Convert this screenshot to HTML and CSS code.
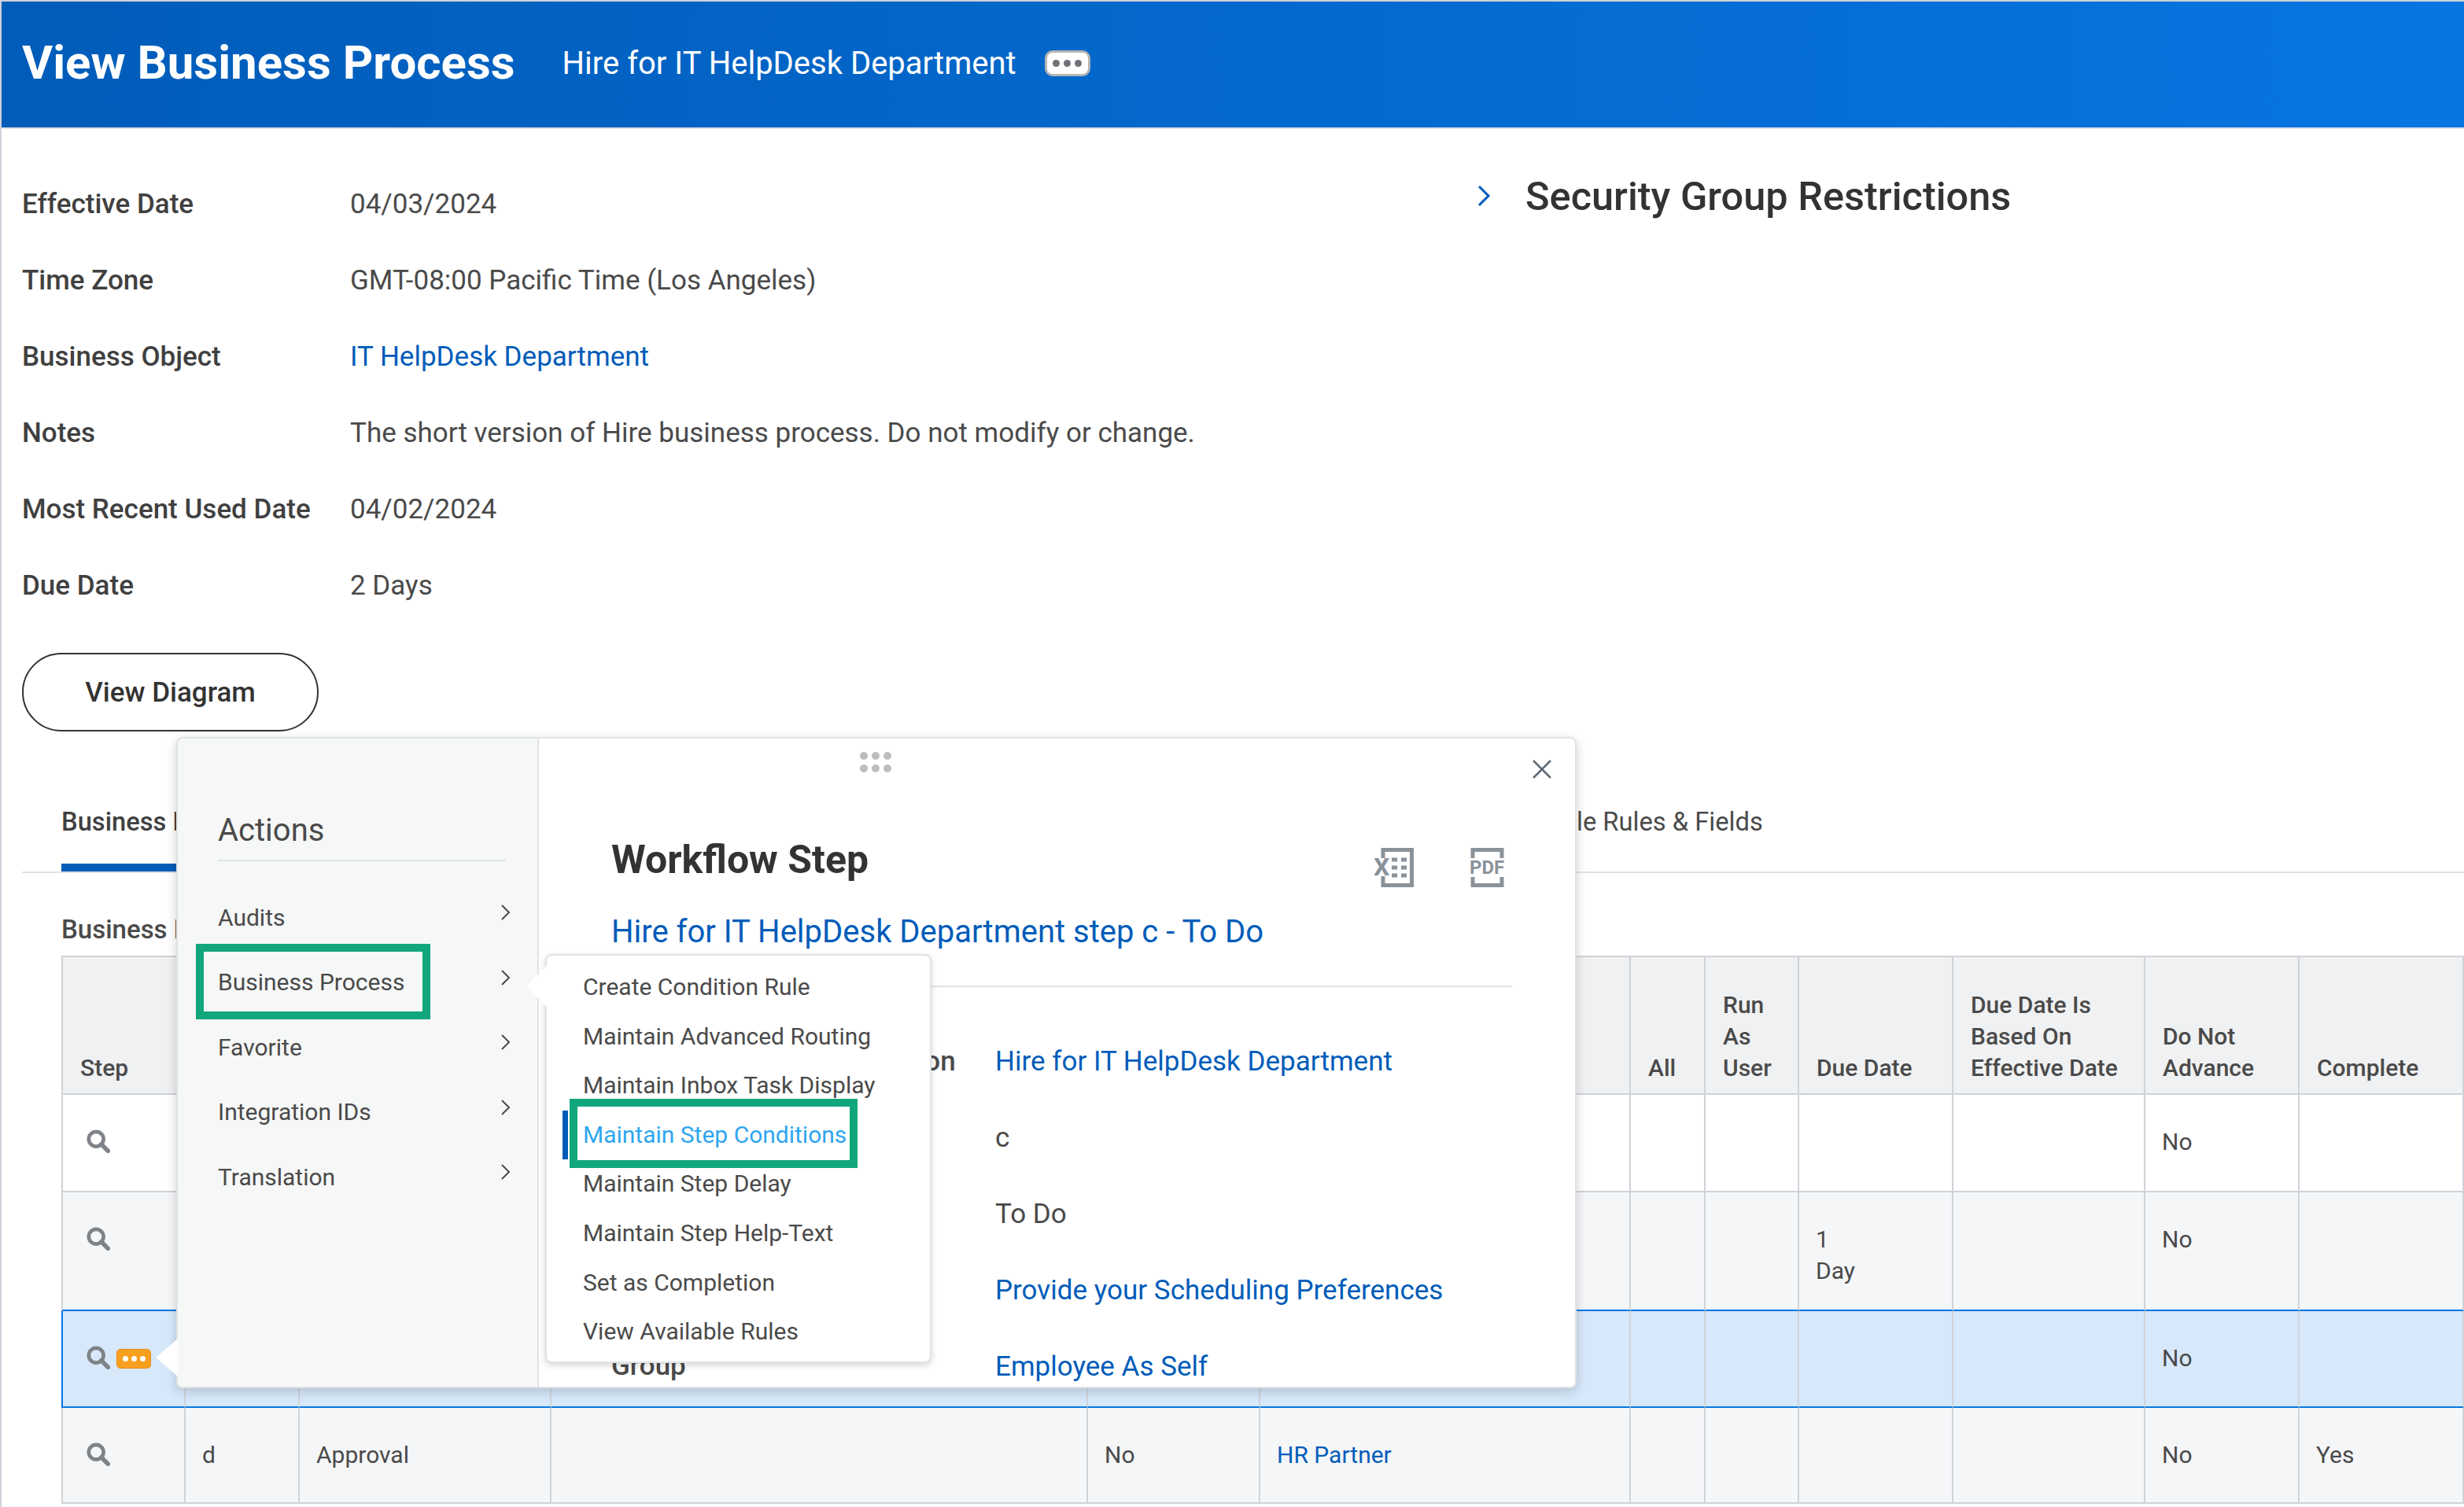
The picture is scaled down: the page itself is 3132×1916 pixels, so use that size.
FILE: index.html
```html
<!DOCTYPE html>
<html lang="en">
<head>
  <meta charset="UTF-8" />
  <meta name="viewport" content="width=device-width, initial-scale=1.0" />
  <title>View Business Process</title>
  <link rel="stylesheet" href="styles.css">
</head>
<body>
  <div class="page">
    <header class="topbar">
      <h1>View Business Process</h1>
      <span class="subtitle">Hire for IT HelpDesk Department</span>
      <button class="kebab"><i></i><i></i><i></i></button>
    </header>

    <main class="content">
      <div class="top-section">
        <dl class="details">
          <dt>Effective Date</dt><dd>04/03/2024</dd>
          <dt>Time Zone</dt><dd>GMT-08:00 Pacific Time (Los Angeles)</dd>
          <dt>Business Object</dt><dd><a href="#">IT HelpDesk Department</a></dd>
          <dt>Notes</dt><dd>The short version of Hire business process. Do not modify or change.</dd>
          <dt>Most Recent Used Date</dt><dd>04/02/2024</dd>
          <dt>Due Date</dt><dd>2 Days</dd>
        </dl>
        <div class="security">
          <svg class="security-chevron" width="18" height="30" viewBox="0 0 18 30"><path d="M3 3l12 12L3 27" fill="none" stroke="#005cb9" stroke-width="3"/></svg>
          <h2>Security Group Restrictions</h2>
        </div>
      </div>

      <button class="pill">View Diagram</button>

      <div class="tabs">
        <span class="tab active">Business Process</span>
        <span class="tab">Available Rules &amp; Fields</span>
      </div>

      <h3 class="section-title">Business Process</h3>

      <table class="steps">
        <colgroup>
          <col class="c1"><col class="c2"><col class="c3"><col class="c4"><col class="c5"><col class="c6">
          <col class="c7"><col class="c8"><col class="c9"><col class="c10"><col class="c11"><col class="c12">
        </colgroup>
        <thead>
          <tr>
            <th>Step</th><th>Order</th><th>Type</th><th>Specify</th><th>Optional</th><th>Group</th>
            <th>All</th><th>Run<br>As<br>User</th><th>Due Date</th><th>Due Date Is<br>Based On<br>Effective Date</th><th>Do Not<br>Advance</th><th>Complete</th>
          </tr>
        </thead>
        <tbody>
          <tr class="row-one">
            <td><svg class="search" width="30" height="30" viewBox="0 0 32 32"><circle cx="13" cy="13" r="10" fill="none" stroke="#7f8387" stroke-width="5"/><path d="M20 20l9 9" stroke="#7f8387" stroke-width="6" stroke-linecap="round"/></svg></td>
            <td></td><td></td><td></td><td></td><td></td><td></td><td></td><td></td><td></td><td>No</td><td></td>
          </tr>
          <tr class="row-two">
            <td><svg class="search" width="30" height="30" viewBox="0 0 32 32"><circle cx="13" cy="13" r="10" fill="none" stroke="#7f8387" stroke-width="5"/><path d="M20 20l9 9" stroke="#7f8387" stroke-width="6" stroke-linecap="round"/></svg></td>
            <td></td><td></td><td></td><td></td><td></td><td></td><td></td><td>1<br>Day</td><td></td><td>No</td><td></td>
          </tr>
          <tr class="row-selected">
            <td>
              <div class="step-icons">
                <svg class="search" width="30" height="30" viewBox="0 0 32 32"><circle cx="13" cy="13" r="10" fill="none" stroke="#7f8387" stroke-width="5"/><path d="M20 20l9 9" stroke="#7f8387" stroke-width="6" stroke-linecap="round"/></svg>
                <span class="orange-btn"><i></i><i></i><i></i></span>
              </div>
            </td>
            <td></td><td></td><td></td><td></td><td></td><td></td><td></td><td></td><td></td><td>No</td><td></td>
          </tr>
          <tr class="row-four">
            <td><svg class="search" width="30" height="30" viewBox="0 0 32 32"><circle cx="13" cy="13" r="10" fill="none" stroke="#7f8387" stroke-width="5"/><path d="M20 20l9 9" stroke="#7f8387" stroke-width="6" stroke-linecap="round"/></svg></td>
            <td>d</td><td>Approval</td><td></td><td>No</td><td><a href="#">HR Partner</a></td><td></td><td></td><td></td><td></td><td>No</td><td>Yes</td>
          </tr>
        </tbody>
      </table>
    </main>

    <!-- popup over the selected row -->
    <div class="popup">
      <span class="popup-arrow"></span>
      <aside class="actions">
        <h4>Actions</h4>
        <ul>
          <li>Audits<svg width="12" height="20" viewBox="0 0 12 20"><path d="M1 1l9 9-9 9" fill="none" stroke="#4a4a4a" stroke-width="2"/></svg></li>
          <li>Business Process<svg width="12" height="20" viewBox="0 0 12 20"><path d="M1 1l9 9-9 9" fill="none" stroke="#4a4a4a" stroke-width="2"/></svg></li>
          <li>Favorite<svg width="12" height="20" viewBox="0 0 12 20"><path d="M1 1l9 9-9 9" fill="none" stroke="#4a4a4a" stroke-width="2"/></svg></li>
          <li>Integration IDs<svg width="12" height="20" viewBox="0 0 12 20"><path d="M1 1l9 9-9 9" fill="none" stroke="#4a4a4a" stroke-width="2"/></svg></li>
          <li>Translation<svg width="12" height="20" viewBox="0 0 12 20"><path d="M1 1l9 9-9 9" fill="none" stroke="#4a4a4a" stroke-width="2"/></svg></li>
        </ul>
      </aside>
      <section class="panel">
        <div class="drag"><i></i><i></i><i></i><i></i><i></i><i></i></div>
        <svg class="close" width="26" height="26" viewBox="0 0 26 26"><path d="M2 2l22 22M24 2L2 24" stroke="#5e6a75" stroke-width="2.5"/></svg>
        <div class="panel-head">
          <h2>Workflow Step</h2>
          <div class="export">
            <svg width="50" height="50" viewBox="0 0 50 50">
              <path d="M11 13V2.5h36.500v45H11V36" fill="none" stroke="#8a929a" stroke-width="5"/>
              <text x="-1" y="35" class="export-text">X</text>
              <path d="M22 15h7M34 15h7M22 25h7M34 25h7M22 35h7M34 35h7" stroke="#8a929a" stroke-width="5"/>
            </svg>
            <svg width="50" height="50" viewBox="0 0 50 50">
              <path d="M5 13V2.500h37V13M5 37v10.500h37V37" fill="none" stroke="#8a929a" stroke-width="5"/>
              <text x="1" y="33" class="export-text small">PDF</text>
            </svg>
          </div>
        </div>
        <a class="panel-link" href="#">Hire for IT HelpDesk Department step c - To Do</a>
        <dl class="fields">
          <dt>Business Process Definition</dt><dd><a href="#">Hire for IT HelpDesk Department</a></dd>
          <dt>Step</dt><dd>c</dd>
          <dt>Type</dt><dd>To Do</dd>
          <dt>To Do</dt><dd><a href="#">Provide your Scheduling Preferences</a></dd>
          <dt>Security<br>Group</dt><dd><a href="#">Employee As Self</a></dd>
        </dl>
      </section>
    </div>

    <div class="submenu">
      <span class="submenu-arrow"></span>
      <ul>
        <li>Create Condition Rule</li>
        <li>Maintain Advanced Routing</li>
        <li>Maintain Inbox Task Display</li>
        <li class="current">Maintain Step Conditions</li>
        <li>Maintain Step Delay</li>
        <li>Maintain Step Help-Text</li>
        <li>Set as Completion</li>
        <li>View Available Rules</li>
      </ul>
    </div>

    <!-- green annotation boxes -->
    <div class="mark mark-process"></div>
    <div class="mark mark-conditions"></div>
  </div>
</body>
</html>
```

FILE: styles.css
```css
* {
  box-sizing: border-box;
}
body {
  margin: 0;
  background: #fff;
  font-family: Roboto, "Liberation Sans", sans-serif;
  color: #4a4a4a;
}
a {
  color: #005cb9;
  text-decoration: none;
}
.page {
  position: relative;
  width: 3132px;
  height: 1916px;
  overflow: hidden;
  border-left: 2px solid #ced3d9;
}

/* header */
.topbar {
  display: flex;
  align-items: center;
  height: 164px;
  padding: 0 0 3px 26px;
  background: linear-gradient(90deg, #005cb9, #0875e1);
  border-top: 2px solid #ced3d9;
  border-bottom: 2px solid #dfe2e6;
  color: #fff;
}
.topbar h1 {
  margin: 0 60px 2px 0;
  font-size: 60px;
  font-weight: 700;
}
.subtitle {
  font-size: 40px;
}
.kebab {
  display: flex;
  align-items: center;
  justify-content: center;
  gap: 5px;
  width: 58px;
  height: 33px;
  margin-left: 36px;
  padding: 0;
  background: #fff;
  border: 3px solid #b5b5b5;
  border-radius: 10px;
}
.kebab i {
  width: 9px;
  height: 9px;
  border-radius: 50%;
  background: #6f7379;
}

/* details */
.content {
  padding-left: 26px;
}
.top-section {
  display: flex;
}
.details {
  display: grid;
  grid-template-columns: 417px 1fr;
  grid-auto-rows: 97px;
  width: 1849px;
  margin: 47px 0 0;
  font-size: 35px;
  line-height: 97px;
}
.details dt {
  font-weight: 500;
  color: #404040;
}
.details dd {
  margin: 0;
}
.security {
  display: flex;
  align-items: center;
  gap: 44px;
  height: 60px;
  margin-top: 55px;
}
.security h2 {
  margin: 0;
  font-size: 50.5px;
  font-weight: 500;
  color: #333;
}
.pill {
  display: block;
  width: 377px;
  height: 100px;
  margin-top: 37px;
  background: #fff;
  border: 2px solid #333;
  border-radius: 50px;
  font: 500 35px Roboto, sans-serif;
  color: #333;
}

/* tabs */
.tabs {
  display: flex;
  height: 122px;
  margin-top: 58px;
  border-bottom: 2px solid #dfe2e6;
  font-size: 32.7px;
  line-height: 114px;
}
.tab.active {
  width: 300px;
  margin-left: 50px;
  border-bottom: 10px solid #005cb9;
  font-weight: 500;
  color: #404040;
}
.tab {
  height: 120px;
}
.tab:last-child {
  margin-left: 1520px;
}
.section-title {
  margin: 49px 0 0 50px;
  font-size: 33px;
  font-weight: 500;
  line-height: 46px;
  color: #4a4a4a;
}

/* table */
.steps {
  width: 3054px;
  margin: 10px 0 0 50px;
  table-layout: fixed;
  border-collapse: separate;
  border-spacing: 0;
  font-size: 30px;
  line-height: 40px;
}
.c1 { width: 158px; }
.c2 { width: 145px; }
.c3 { width: 320px; }
.c4 { width: 682px; }
.c5 { width: 219px; }
.c6 { width: 471px; }
.c7 { width: 95px; }
.c8 { width: 119px; }
.c9 { width: 196px; }
.c10 { width: 244px; }
.c11 { width: 196px; }
.c12 { width: 209px; }
.steps th,
.steps td {
  padding: 40px 0 0 21px;
  border-right: 2px solid #ced3d9;
  border-bottom: 2px solid #ced3d9;
  vertical-align: top;
}
.steps th {
  height: 177px;
  padding: 0 0 12px 22px;
  border-top: 2px solid #ced3d9;
  background: #f0f1f2;
  font-weight: 500;
  text-align: left;
  vertical-align: bottom;
}
.steps tr > :first-child {
  border-left: 2px solid #ced3d9;
}
.row-one { height: 124px; }
.row-two { height: 151px; }
.row-selected { height: 123px; }
.row-four { height: 122px; }
.row-two td,
.row-four td {
  background: #f5f6f8;
}
.steps .row-two td {
  border-bottom-color: #0875e1;
}
.row-selected td {
  background: #d6e8fa;
}
.steps .row-selected td {
  border-bottom-color: #0875e1;
}
.steps .row-selected td:first-child {
  border-left-color: #0875e1;
}
.search {
  display: block;
  margin: 4px 0 0 9px;
}
.step-icons {
  display: flex;
  align-items: center;
  gap: 8px;
}
.orange-btn {
  display: flex;
  align-items: center;
  justify-content: center;
  gap: 4px;
  width: 44px;
  height: 25px;
  margin-top: 6px;
  background: #f7a01f;
  border: 1px solid #f08a1d;
  border-radius: 5px;
}
.orange-btn i {
  width: 7px;
  height: 7px;
  border-radius: 50%;
  background: #fff;
}

/* popup */
.popup {
  position: absolute;
  left: 222px;
  top: 937px;
  display: flex;
  width: 1780px;
  height: 828px;
  background: #fff;
  border: 2px solid #dfe2e6;
  border-radius: 8px;
  box-shadow: 0 4px 14px rgba(0, 0, 0, 0.18);
}
.popup-arrow {
  position: absolute;
  left: -28px;
  top: 763px;
  border-top: 24px solid transparent;
  border-bottom: 24px solid transparent;
  border-right: 28px solid #fff;
}
.actions {
  width: 459px;
  padding: 92px 40px 0 51px;
  background: #f6f7f7;
  border-right: 2px solid #dfe2e6;
  border-radius: 6px 0 0 6px;
}
.actions h4 {
  margin: 0;
  padding-bottom: 12px;
  border-bottom: 2px solid #dfe2e6;
  font-size: 40px;
  font-weight: 400;
  line-height: 50px;
}
.actions ul {
  margin: 30px 0 0;
  padding: 0;
  list-style: none;
}
.actions li {
  display: flex;
  justify-content: space-between;
  align-items: center;
  height: 82.5px;
  font-size: 30px;
}
.actions li svg {
  margin: -12px -6px 0 0;
}

.panel {
  position: relative;
  flex: 1;
  height: 824px;
  overflow: hidden;
  padding: 124px 80px 0 92px;
}
.drag {
  position: absolute;
  left: 408px;
  top: 17px;
  display: grid;
  grid-template-columns: repeat(3, 10px);
  gap: 6px 5px;
}
.drag i {
  width: 10px;
  height: 10px;
  border-radius: 50%;
  background: #bdbdbd;
}
.close {
  position: absolute;
  right: 29px;
  top: 26px;
}
.panel-head {
  display: flex;
  justify-content: space-between;
  align-items: flex-start;
  height: 60px;
}
.panel-head h2 {
  margin: 0;
  font-size: 50px;
  font-weight: 700;
  line-height: 60px;
  color: #333;
}
.export {
  display: flex;
  gap: 70px;
  margin: 15px 5px 0 0;
}
.export-text {
  font: 700 32px Roboto, sans-serif;
  fill: #8a929a;
}
.export-text.small {
  font-size: 24px;
}
.panel-link {
  display: block;
  margin-top: 37px;
  padding-bottom: 43px;
  border-bottom: 2px solid #dfe2e6;
  font-size: 40px;
  line-height: 50px;
}
.fields {
  display: grid;
  grid-template-columns: 488px 1fr;
  grid-auto-rows: 97px;
  margin: 46px 0 0;
  font-size: 35px;
  line-height: 97px;
}
.fields dt {
  font-weight: 500;
  white-space: nowrap;
}
.fields dd {
  margin: 0;
}
.fields dt:last-of-type {
  line-height: 40px;
  margin-top: -12px;
}

/* submenu */
.submenu {
  position: absolute;
  left: 691px;
  top: 1213px;
  width: 491px;
  height: 520px;
  padding-top: 9px;
  background: #fff;
  border: 2px solid #dfe2e6;
  border-radius: 8px;
  box-shadow: 0 3px 8px rgba(0, 0, 0, 0.16);
}
.submenu-arrow {
  position: absolute;
  left: -26px;
  top: 13px;
  border-top: 26px solid transparent;
  border-bottom: 26px solid transparent;
  border-right: 26px solid #fff;
}
.submenu ul {
  margin: 0;
  padding: 0;
  list-style: none;
}
.submenu li {
  height: 62.6px;
  padding-left: 46px;
  font-size: 30px;
  line-height: 62.6px;
}
.submenu li.current {
  position: relative;
  color: #2ea6ef;
}
.submenu li.current::before {
  content: "";
  position: absolute;
  left: 20px;
  top: 0;
  width: 7px;
  height: 62px;
  background: #005cb9;
}

/* annotations */
.mark {
  position: absolute;
  border: 10px solid #12a67c;
}
.mark-process {
  left: 247px;
  top: 1200px;
  width: 298px;
  height: 96px;
}
.mark-conditions {
  left: 722px;
  top: 1397px;
  width: 366px;
  height: 88px;
}
```
